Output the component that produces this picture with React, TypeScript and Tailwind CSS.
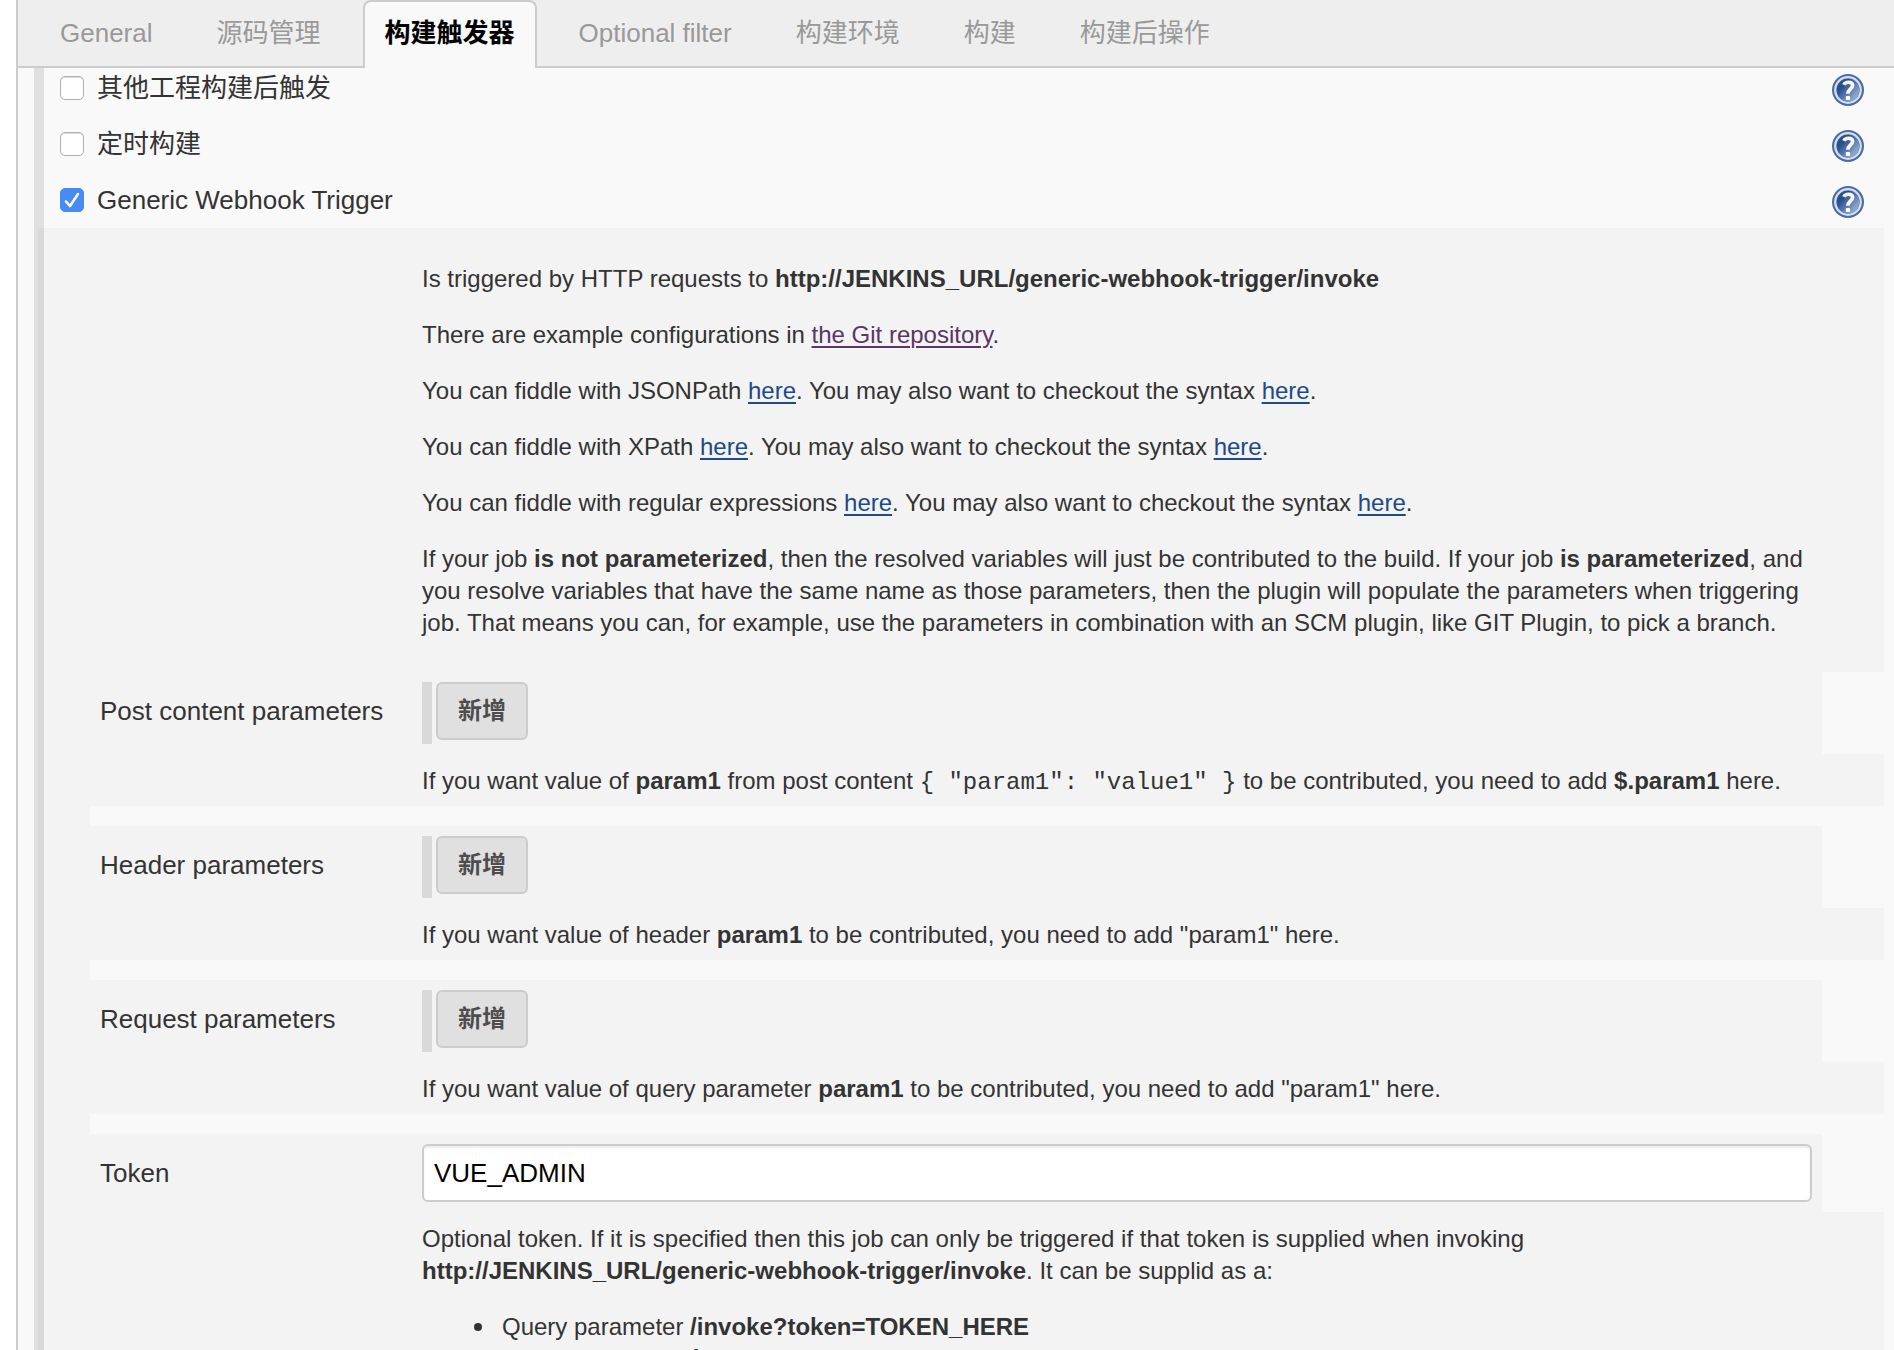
import React, { useId } from "react";

const TABS = ["General", "源码管理", "构建触发器", "Optional filter", "构建环境", "构建", "构建后操作"];
const ACTIVE_TAB = "构建触发器";
const INVOKE_URL = "http://JENKINS_URL/generic-webhook-trigger/invoke";

function HelpIcon() {
  const fill = useId();
  return (
    <svg viewBox="0 0 32 32" className="size-8" aria-hidden="true">
      <defs>
        <linearGradient id={fill} x1="0.1" y1="0.2" x2="0.9" y2="0.9">
          <stop offset="0.2" stopColor="#2b4f8c" />
          <stop offset="1" stopColor="#9db6dc" />
        </linearGradient>
      </defs>
      <circle cx="16" cy="16" r="16" fill="#4a6ca5" />
      <circle cx="16" cy="16" r="12.8" fill="#5d7db0" stroke="#d3ddec" strokeWidth="2.2" />
      <circle cx="16" cy="16" r="11.2" fill={`url(#${fill})`} />
      <path
        d="M11.800 10.800c.8-1.800 2.400-2.600 4.500-2.600 2.700 0 4.300 1.300 4.300 3.300 0 3.300-4.700 3.700-4.700 8.300"
        fill="none"
        stroke="#f4f7fb"
        strokeWidth="3.6"
      />
      <rect x="13.8" y="22" width="4.400" height="4" rx="1" fill="#fff" />
    </svg>
  );
}

function TriggerRow({ id, label, checked = false }: { id: string; label: string; checked?: boolean }) {
  return (
    <div className="flex h-14 items-start pl-4 pr-5">
      <span className="relative mt-4 size-6 shrink-0">
        <input
          id={id}
          type="checkbox"
          defaultChecked={checked}
          className="peer block size-6 appearance-none rounded-[5px] border border-[#b0b0b0] bg-white shadow-[inset_0_1px_1px_rgba(0,0,0,0.15)] checked:border-[#458af5] checked:bg-[#458af5] checked:shadow-none"
        />
        <svg viewBox="0 0 24 24" className="pointer-events-none absolute inset-0 hidden size-6 peer-checked:block" aria-hidden="true">
          <path d="M6 13.500l4 4.500L18 6" fill="none" stroke="#fff" strokeWidth="2.600" strokeLinecap="round" strokeLinejoin="round" />
        </svg>
      </span>
      <label htmlFor={id} className="mt-[11px] pl-[13px] text-[26px] leading-[34px]">
        {label}
      </label>
      <button type="button" aria-label={`Help: ${label}`} className="ml-auto mt-3.5">
        <HelpIcon />
      </button>
    </div>
  );
}

function Link({ visited = false, children }: { visited?: boolean; children: React.ReactNode }) {
  return (
    <a
      href="#"
      className={
        visited
          ? "text-[#5c3566] underline decoration-2 underline-offset-3"
          : "text-[#204a87] underline decoration-2 underline-offset-3"
      }
    >
      {children}
    </a>
  );
}

function SettingRow({ label, htmlFor, children }: { label: string; htmlFor: string; children: React.ReactNode }) {
  return (
    <div className="mr-[62px] flex bg-[#f3f3f3] py-2.5 pr-2.5">
      <label htmlFor={htmlFor} className="w-[378px] shrink-0 pl-14 pt-[13px] text-[26px] leading-8">
        {label}
      </label>
      {children}
    </div>
  );
}

function Help({ children }: { children: React.ReactNode }) {
  return <div className="bg-[#f3f3f3] pb-[9px] pl-[378px] pr-[72px] pt-[11px] text-2xl leading-8">{children}</div>;
}

function ParameterSetting({ id, label, children }: { id: string; label: string; children: React.ReactNode }) {
  return (
    <>
      <SettingRow label={label} htmlFor={id}>
        <div className="flex items-start gap-1">
          <div className="h-[62px] w-2.5 bg-[#d9d9d9]" />
          <button
            id={id}
            type="button"
            className="h-[58px] rounded-md border-2 border-[#cccccc] bg-[#e0e0e0] px-5 text-2xl font-bold text-[#4d4d4d]"
          >
            新增
          </button>
        </div>
      </SettingRow>
      <Help>{children}</Help>
      <div className="h-5 border-l-46 border-[#f3f3f3]" />
    </>
  );
}

function Bullet({ children }: { children: React.ReactNode }) {
  return (
    <li className="flex gap-5 pl-[52px] before:mt-3 before:size-2 before:shrink-0 before:rounded-full before:bg-[#333333]">
      <span>{children}</span>
    </li>
  );
}

export default function App() {
  return (
    <div className="h-screen overflow-hidden bg-white pl-4 font-['Liberation_Sans','Noto_Sans_CJK_SC',sans-serif] text-[#333333]">
      <div className="flex h-full flex-col border-l-2 border-[#cccccc] bg-[#f9f9f9]">
        <nav className="flex h-[68px] shrink-0 gap-5 bg-[#eeeeee] pl-5 shadow-[inset_0_-2px_0_#cccccc]">
          {TABS.map((tab) => (
            <button
              key={tab}
              type="button"
              className={
                tab === ACTIVE_TAB
                  ? "rounded-t-lg border-2 border-b-0 border-[#cccccc] bg-[#f9f9f9] px-5 pb-1 text-[26px] font-bold text-black"
                  : "px-[22px] pb-0.5 text-[26px] text-[#999999]"
              }
            >
              {tab}
            </button>
          ))}
        </nav>

        <main className="min-h-0 flex-1 overflow-hidden pl-4 pr-2.5">
          <div className="-mt-2 border-l-10 border-[#e0e0e0]">
            <TriggerRow id="after-other" label="其他工程构建后触发" />
            <TriggerRow id="timed" label="定时构建" />
            <TriggerRow id="generic-webhook" label="Generic Webhook Trigger" checked />
          </div>

          <div className="border-l-4 border-[#e0e0e0]">
            <section className="border-l-6 border-[#d9d9d9]">
              <div className="space-y-6 bg-[#f3f3f3] pb-[33px] pl-[378px] pr-[72px] pt-[35px] text-2xl leading-8">
                <p>
                  Is triggered by HTTP requests to <b>{INVOKE_URL}</b>
                </p>
                <p>
                  There are example configurations in <Link visited>the Git repository</Link>.
                </p>
                <p>
                  You can fiddle with JSONPath <Link>here</Link>. You may also want to checkout the syntax <Link>here</Link>.
                </p>
                <p>
                  You can fiddle with XPath <Link>here</Link>. You may also want to checkout the syntax <Link>here</Link>.
                </p>
                <p>
                  You can fiddle with regular expressions <Link>here</Link>. You may also want to checkout the syntax{" "}
                  <Link>here</Link>.
                </p>
                <p>
                  If your job <b>is not parameterized</b>, then the resolved variables will just be contributed to the build. If
                  your job <b>is parameterized</b>, and you resolve variables that have the same name as those parameters, then the
                  plugin will populate the parameters when triggering job. That means you can, for example, use the parameters in
                  combination with an SCM plugin, like GIT Plugin, to pick a branch.
                </p>
              </div>
              <ParameterSetting id="post-content" label="Post content parameters">
                If you want value of <b>param1</b> from post content{" "}
                <code className="font-['Liberation_Mono',monospace] leading-none">{'{ "param1": "value1" }'}</code> to be
                contributed, you need to add <b>$.param1</b> here.
              </ParameterSetting>
              <ParameterSetting id="header-params" label="Header parameters">
                If you want value of header <b>param1</b> to be contributed, you need to add "param1" here.
              </ParameterSetting>
              <ParameterSetting id="request-params" label="Request parameters">
                If you want value of query parameter <b>param1</b> to be contributed, you need to add "param1" here.
              </ParameterSetting>
              <SettingRow label="Token" htmlFor="token">
                <input
                  id="token"
                  type="text"
                  defaultValue="VUE_ADMIN"
                  className="h-[58px] min-w-0 flex-1 rounded-md border-2 border-[#cccccc] bg-white px-2.5 text-[26px] text-black shadow-[inset_0_2px_2px_rgba(0,0,0,0.075)]"
                />
              </SettingRow>
              <Help>
                <p>
                  Optional token. If it is specified then this job can only be triggered if that token is supplied when invoking{" "}
                  <b>{INVOKE_URL}</b>. It can be supplid as a:
                </p>
                <ul className="mt-6">
                  <Bullet>
                    Query parameter <b>/invoke?token=TOKEN_HERE</b>
                  </Bullet>
                  <Bullet>
                    A token header <b>token: TOKEN_HERE</b>
                  </Bullet>
                </ul>
              </Help>
            </section>
          </div>
        </main>
      </div>
    </div>
  );
}
